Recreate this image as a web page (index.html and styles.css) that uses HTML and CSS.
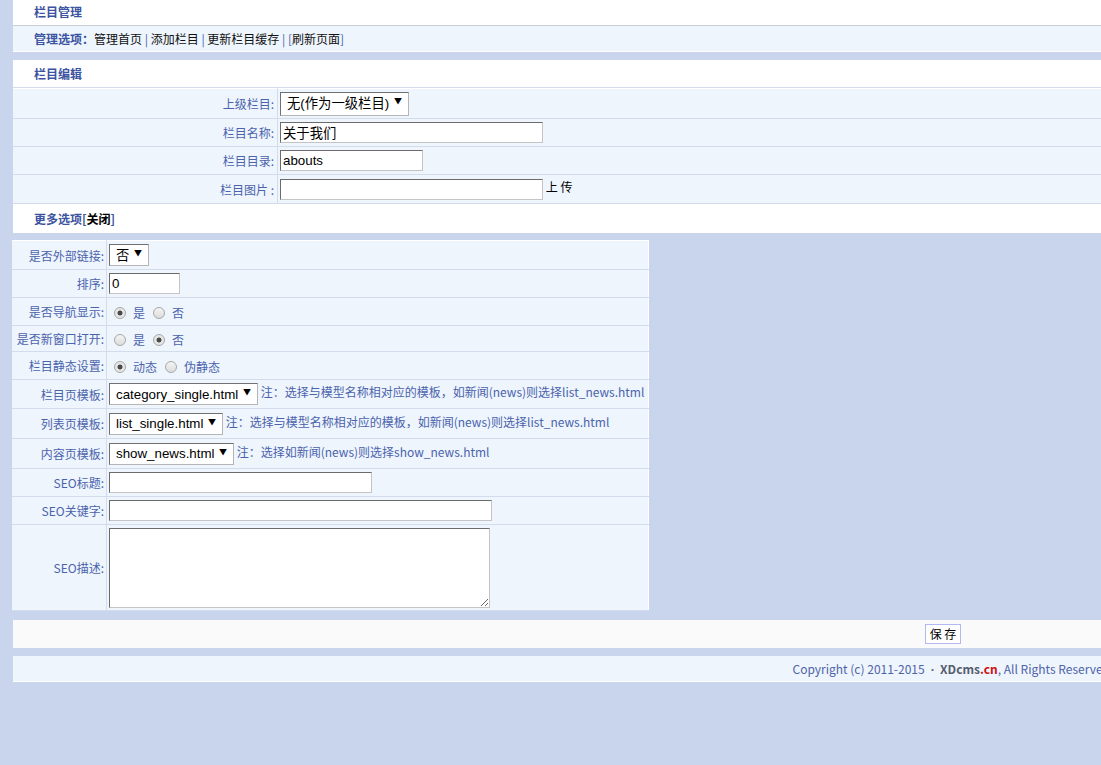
FILE: index.html
```html
<!DOCTYPE html>
<html lang="zh-CN">
<head>
<meta charset="utf-8">
<title>栏目管理</title>
<link rel="stylesheet" href="styles.css">
</head>
<body>
<div class="panel">
  <div class="panel-head">栏目管理</div>
  <div class="panel-opts"><b class="opt-title">管理选项：</b><a>管理首页</a> <span class="sep">|</span> <a>添加栏目</a> <span class="sep">|</span> <a>更新栏目缓存</a> <span class="sep">|</span> <span class="sep">[</span><a>刷新页面</a><span class="sep">]</span></div>
</div>

<div class="panel panel-edit">
  <div class="panel-head tall">栏目编辑</div>
  <table class="form-main">
    <tr class="r30">
      <td class="lbl">上级栏目:</td>
      <td><span class="sel"><select class="s-parent"><option>无(作为一级栏目)</option></select></span></td>
    </tr>
    <tr>
      <td class="lbl">栏目名称:</td>
      <td><input class="txt w263" type="text" value="关于我们"></td>
    </tr>
    <tr>
      <td class="lbl">栏目目录:</td>
      <td><input class="txt w143" type="text" value="abouts"></td>
    </tr>
    <tr class="r29">
      <td class="lbl">栏目图片 :</td>
      <td><input class="txt w263" type="text" value=""> <span class="upload">上 传</span></td>
    </tr>
  </table>
  <div class="more">更多选项[<span class="more-link">关闭</span>]</div>
</div>

<table class="form-more">
  <tr class="r29">
    <td class="lbl">是否外部链接:</td>
    <td><span class="sel"><select class="s-no"><option>否</option></select></span></td>
  </tr>
  <tr>
    <td class="lbl">排序:</td>
    <td><input class="txt w71" type="text" value="0"></td>
  </tr>
  <tr>
    <td class="lbl">是否导航显示:</td>
    <td><label class="rad"><input type="radio" name="nav" checked>是</label><label class="rad"><input type="radio" name="nav">否</label></td>
  </tr>
  <tr class="r26">
    <td class="lbl">是否新窗口打开:</td>
    <td><label class="rad"><input type="radio" name="win">是</label><label class="rad"><input type="radio" name="win" checked>否</label></td>
  </tr>
  <tr>
    <td class="lbl">栏目静态设置:</td>
    <td><label class="rad"><input type="radio" name="st" checked>动态</label><label class="rad"><input type="radio" name="st">伪静态</label></td>
  </tr>
  <tr class="r29">
    <td class="lbl">栏目页模板:</td>
    <td><span class="sel"><select class="s-cat"><option>category_single.html</option></select></span> <span class="note">注：选择与模型名称相对应的模板，如新闻(news)则选择list_news.html</span></td>
  </tr>
  <tr class="r30">
    <td class="lbl">列表页模板:</td>
    <td><span class="sel"><select class="s-list"><option>list_single.html</option></select></span> <span class="note">注：选择与模型名称相对应的模板，如新闻(news)则选择list_news.html</span></td>
  </tr>
  <tr class="r30">
    <td class="lbl">内容页模板:</td>
    <td><span class="sel"><select class="s-show"><option>show_news.html</option></select></span> <span class="note">注：选择如新闻(news)则选择show_news.html</span></td>
  </tr>
  <tr>
    <td class="lbl">SEO标题:</td>
    <td><input class="txt w263" type="text" value=""></td>
  </tr>
  <tr>
    <td class="lbl">SEO关键字:</td>
    <td><input class="txt w383" type="text" value=""></td>
  </tr>
  <tr>
    <td class="lbl">SEO描述:</td>
    <td><textarea class="area"></textarea></td>
  </tr>
</table>

<div class="panel savebar">
  <button class="btn" type="button">保 存</button>
</div>

<div class="panel footer">
  Copyright (c) 2011-2015 <span class="dot">•</span> <b class="brand">XDcms<span class="cn">.cn</span></b>, All Rights Reserved
</div>
</body>
</html>
```
FILE: styles.css
```css
html {
  overflow: hidden;
}
body {
  margin: 0;
  background: #c9d5ec;
  font-family: "Noto Sans CJK SC", "Noto Sans", sans-serif;
  font-size: 12px;
  color: #4b63ac;
  width: 1200px;
}
.panel {
  margin-left: 13px;
  width: 1100px;
}
.panel-head {
  height: 25px;
  line-height: 24px;
  background: #fff;
  border-bottom: 1px solid #c8d0dc;
  padding-left: 21px;
  font-weight: bold;
  font-size: 12px;
  color: #3b53a0;
}
.panel-head.tall {
  height: 27px;
  line-height: 27px;
  border-bottom: 1px solid #d3dcec;
}
.panel-opts {
  height: 25px;
  line-height: 26px;
  background: #eef5fd;
  border-bottom: 1px solid #fff;
  padding-left: 21px;
  color: #111;
}
.opt-title {
  color: #3b53a0;
}
.panel-opts a {
  color: #111;
}
.sep {
  color: #4b63ac;
}
.panel-edit {
  margin-top: 8px;
}
table {
  border-collapse: collapse;
}
.form-main {
  width: 1100px;
  background: #eef5fd;
}
.form-main td, .form-more td {
  border-bottom: 1px solid #d3dcec;
  border-top: 1px solid #fff;
  padding: 1px 2px;
  vertical-align: middle;
}
.form-main tr {
  height: 28px;
}
.form-main .lbl {
  width: 259px;
  text-align: right;
  padding-right: 3px;
  border-right: 1px solid #d3dcec;
}
.form-main tr.r30 { height: 30px; }
.form-main tr.r29 { height: 29px; }
.more {
  height: 29px;
  line-height: 29px;
  background: #fff;
  padding-left: 21px;
  font-weight: bold;
  color: #3b53a0;
}
.more-link {
  color: #000;
}
.form-more {
  margin: 7px 0 0 12px;
  width: 637px;
  background: #eef5fd;
  border-right: 1px solid #fff;
}
.form-more tr { height: 28px; }
.form-more tr.r26 { height: 26px; }
.form-more tr.r29 { height: 29px; }
.form-more tr.r30 { height: 30px; }
.form-more .lbl {
  width: 89px;
  text-align: right;
  padding: 1px 2px 1px 3px;
  border-right: 1px solid #d3dcec;
  white-space: nowrap;
}
.txt {
  box-sizing: border-box;
  height: 21px;
  margin: 0;
  padding: 0 2px;
  border: 1px solid #c4c4c4;
  border-top-color: #6b6b6b;
  border-left-color: #6b6b6b;
  background: #fff;
  font-family: "Liberation Sans", "Noto Sans CJK SC", sans-serif;
  font-size: 13.333px;
  color: #000;
  vertical-align: middle;
}
.w263 { width: 263px; }
.w143 { width: 143px; }
.w71 { width: 71px; }
.w383 { width: 383px; }
.upload {
  color: #000;
}
.sel {
  display: inline-block;
  position: relative;
  vertical-align: middle;
}
.sel::after {
  content: "▼";
  position: absolute;
  right: 7px;
  top: 3px;
  font-size: 8px;
  color: #000;
  pointer-events: none;
}
.sel select {
  -webkit-appearance: none;
  appearance: none;
  box-sizing: border-box;
  height: 22px;
  margin: 0;
  padding: 0 14px 0 6px;
  border: 1px solid #b5b5b5;
  border-top-color: #707070;
  border-left-color: #707070;
  border-radius: 0;
  background: #fff;
  font-family: "Liberation Sans", "Noto Sans CJK SC", sans-serif;
  font-size: 13.333px;
  color: #000;
}
.s-parent { width: 129px; height: 24px !important; }
.s-no { width: 40px; }
.s-cat { width: 149px; }
.s-list { width: 114px; }
.s-show { width: 125px; }
.note {
  color: #4b63ac;
}
.rad {
  display: inline-flex;
  align-items: center;
  margin-left: 5px;
  margin-right: 3px;
  color: #4b63ac;
  vertical-align: middle;
}
.rad input {
  -webkit-appearance: none;
  appearance: none;
  width: 12px;
  height: 12px;
  margin: 0 7px 0 0;
  border: 1px solid #a8a8a8;
  border-radius: 50%;
  background: linear-gradient(#f4f4f4, #dcdcdc);
}
.rad input:checked {
  background: radial-gradient(circle, #4a4a4a 0 2.2px, #e6e6e6 2.8px);
}
.area {
  box-sizing: border-box;
  display: block;
  width: 381px;
  height: 80px;
  margin: 2px 0 1px;
  border: 1px solid #c4c4c4;
  border-top-color: #6b6b6b;
  border-left-color: #6b6b6b;
  background: #fff;
}
.savebar {
  margin-top: 9px;
  height: 28px;
  background: #fafafa;
  display: flex;
  align-items: center;
  padding-left: 912px;
  box-sizing: border-box;
}
.btn {
  height: 20px;
  width: 36px;
  padding: 0;
  border: 1px solid #b4b8f0;
  background: #fff;
  font-family: "Noto Sans CJK SC", sans-serif;
  font-size: 12px;
  color: #000;
  line-height: 16px;
}
.footer {
  margin-top: 8px;
  height: 25px;
  line-height: 25px;
  background: #eef5fd;
  border-bottom: 1px solid #fff;
  text-align: right;
  padding-right: 3px;
  box-sizing: content-box;
  width: 1097px;
  color: #4f63a8;
}
.dot {
  font-size: 10px;
  color: #666;
}
.brand {
  color: #555c6e;
}
.cn {
  color: #cc1111;
}
```
